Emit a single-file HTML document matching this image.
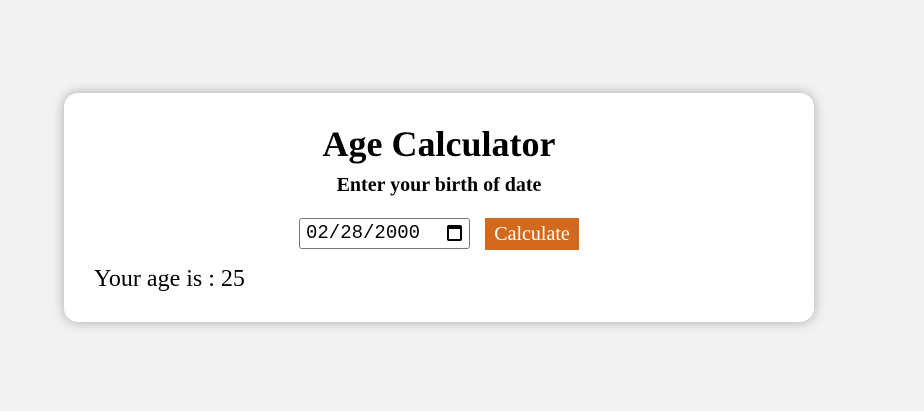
<!DOCTYPE html>
<html><head><style>
body{margin:0;background:#f2f2f2;width:924px;height:411px;font-family:"Liberation Serif",serif;}
.card{position:absolute;left:64px;top:93px;width:750px;height:229px;background:#fff;border-radius:14px;box-shadow:0 0 12px rgba(0,0,0,0.3);}
h1{position:absolute;top:30px;left:0;width:750px;text-align:center;margin:0;font-size:36px;font-weight:bold;line-height:42px;}
.sub{position:absolute;top:81px;left:0;width:750px;text-align:center;font-size:20px;font-weight:bold;line-height:22px;}
.inp{position:absolute;left:235px;top:125px;width:171px;height:31px;border:1px solid #767676;border-radius:3px;box-sizing:border-box;font-family:"Liberation Mono",monospace;font-size:19px;line-height:29px;padding-left:6px;}
.cal{position:absolute;right:7px;top:6px;width:15px;height:16px;border:2px solid #000;border-top-width:4px;border-radius:2px;box-sizing:border-box;}
.btn{position:absolute;left:421px;top:125px;width:94px;height:32px;background:#d2691e;color:#fff;font-size:20px;line-height:32px;text-align:center;}
.age{position:absolute;left:30px;top:172px;font-size:24px;line-height:28px;}
</style></head><body>
<div class="card">
<h1>Age Calculator</h1>
<div class="sub">Enter your birth of date</div>
<div class="inp">02/28/2000<span class="cal"></span></div>
<div class="btn">Calculate</div>
<div class="age">Your age is : 25</div>
</div>
</body></html>
